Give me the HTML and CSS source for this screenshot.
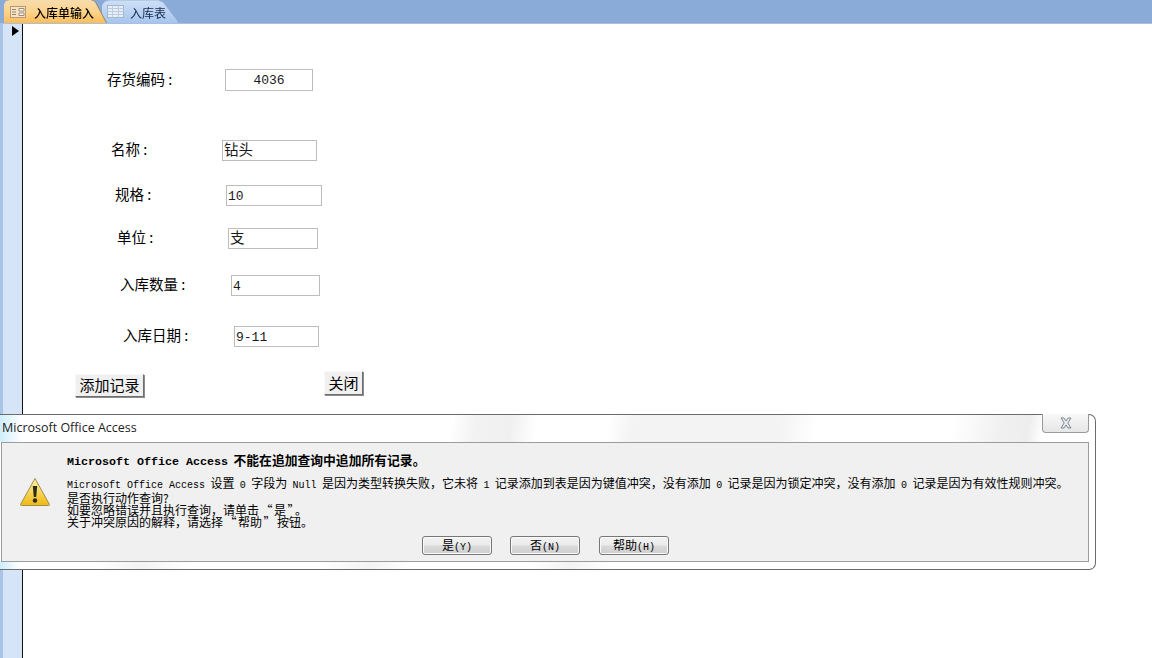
FILE: index.html
```html
<!DOCTYPE html>
<html lang="zh-CN">
<head>
<meta charset="utf-8">
<title>入库单输入</title>
<link rel="stylesheet" href="styles.css">
</head>
<body>
<div class="tabbar">
  <div class="tab tab-active">
    <svg class="tab-icon" width="20" height="16" viewBox="0 0 20 16"><rect x="1.500" y="2.500" width="15" height="11" fill="#f6e2c4" stroke="#b89a78"/><path d="M3 5.500h4M3 8h4M3 10.500h4" stroke="#9a8468"/><path d="M10 4.500h5v2.500h-5zM10 9h5v2.500h-5z" fill="#fff" stroke="#a08a70"/></svg>
    <span class="tab-text">入库单输入</span>
  </div>
  <div class="tab tab-idle">
    <svg class="tab-icon" width="20" height="16" viewBox="0 0 20 16"><rect x="1.500" y="1.500" width="16" height="12" fill="#e6eef8" stroke="#a3b5cc"/><path d="M1.500 4.500h16M1.500 7.500h16M1.500 10.500h16M6.500 1.500v12M12.500 1.500v12" stroke="#bccbde"/></svg>
    <span class="tab-text">入库表</span>
  </div>
</div>
<div class="workspace">
  <div class="selector"><i class="arrow"></i></div>
  <main class="form">
    <div class="row r1"><label class="lbl">存货编码 :</label><div class="field f-code">4036</div></div>
    <div class="row r2"><label class="lbl">名称 :</label><div class="field f2">钻头</div></div>
    <div class="row r3"><label class="lbl">规格 :</label><div class="field f3">10</div></div>
    <div class="row r4"><label class="lbl">单位 :</label><div class="field f4">支</div></div>
    <div class="row r5"><label class="lbl">入库数量 :</label><div class="field f5">4</div></div>
    <div class="row r6"><label class="lbl">入库日期 :</label><div class="field f6">9-11</div></div>
    <div class="actions">
      <button class="fbtn fb-add">添加记录</button>
      <button class="fbtn fb-close">关闭</button>
    </div>
  </main>
</div>
<section class="dialog">
  <header class="dlg-title">
    <span>Microsoft Office Access</span>
    <div class="dlg-x"><svg width="14" height="12" viewBox="0 0 14 12"><path d="M2 1h3l2 3 2-3h3L8.800 6 12 11H9L7 8l-2 3H2l3.200-5z" fill="#e8ecf0" stroke="#7d8792"/></svg></div>
  </header>
  <div class="dlg-panel">
    <svg class="warn" width="32" height="30" viewBox="0 0 32 30">
      <defs><linearGradient id="wg" x1="0" y1="0" x2="0" y2="1"><stop offset="0" stop-color="#fff3a6"/><stop offset="1" stop-color="#eeb90f"/></linearGradient></defs>
      <path d="M16 1.500 30.500 27.500a1 1 0 0 1-1 1H2.500a1 1 0 0 1-1-1z" fill="url(#wg)" stroke="#a08c50"/>
      <path d="M13.800 9h4.400l-1 11h-2.400z" fill="#2c2c1e"/><circle cx="16" cy="23.500" r="2.200" fill="#2c2c1e"/>
    </svg>
    <div class="msg">
      <p class="msg-head"><span class="lat-b">Microsoft Office Access</span> 不能在追加查询中追加所有记录。</p>
      <p class="msg-line"><span class="lat">Microsoft Office Access</span> 设置 <span class="lat">0</span> 字段为 <span class="lat">Null</span> 是因为类型转换失败，它未将 <span class="lat">1</span> 记录添加到表是因为键值冲突，没有添加 <span class="lat">0</span> 记录是因为锁定冲突，没有添加 <span class="lat">0</span> 记录是因为有效性规则冲突。</p>
      <p class="msg-line">是否执行动作查询?</p>
      <p class="msg-line">如要忽略错误并且执行查询，请单击<span class="q">“</span>是<span class="q">”</span>。</p>
      <p class="msg-line">关于冲突原因的解释，请选择<span class="q">“</span>帮助<span class="q">”</span>按钮。</p>
    </div>
    <div class="dlg-actions">
      <button class="dbtn">是<span class="lat">(Y)</span></button>
      <button class="dbtn">否<span class="lat">(N)</span></button>
      <button class="dbtn">帮助<span class="lat">(H)</span></button>
    </div>
  </div>
</section>
</body>
</html>
```
FILE: styles.css
```css
* { box-sizing: border-box; }
html, body { margin: 0; padding: 0; }
body {
  width: 1152px; height: 658px; overflow: hidden; position: relative;
  background: #fff; color: #000;
  font-family: "Noto Sans CJK SC", "Liberation Sans", sans-serif;
  display: flex; flex-direction: column;
}
.tabbar {
  height: 24px; flex: none; display: flex; padding-left: 4px;
  background: #8aabd8;
  border-bottom: 1px solid #a9bfdc;
}
.tab {
  height: 23px; display: flex; align-items: center; font-size: 12px;
  position: relative; padding-top: 1px;
}
.tab::before { content: ""; position: absolute; inset: 0; }
.tab-icon, .tab-text { position: relative; }
.tab-icon { flex: none; }
.tab-active {
  width: 102px; padding-left: 5px; gap: 5px; font-weight: 500; z-index: 2;
  filter: drop-shadow(1px 0 0 #8f8468);
}
.tab-active::before {
  background: linear-gradient(#f6dcae 0, #fcd48c 50%, #fdbd58 100%);
  clip-path: polygon(0 23px, 0 4px, 2px 1px, 6px 0, 87px 0, 91px 2px, 102px 23px);
}
.tab-idle {
  width: 76px; margin-left: -4px; padding-left: 4px; gap: 4px; color: #15294b;
  filter: drop-shadow(0 -1px 0 #b4cbe8);
}
.tab-idle::before {
  background: linear-gradient(#cfe0f6, #a6c5ee);
  clip-path: polygon(0 23px, 0 6px, 3px 2px, 8px 1px, 56px 1px, 61px 3px, 76px 23px);
}
.workspace { flex: 1; display: flex; min-height: 0; }
.selector {
  width: 23px; flex: none; padding: 2px 0 0 9px;
  background: #d5e4f6; border-left: 3px solid #aac4e6; border-right: 1px solid #111;
}
.arrow {
  display: block; width: 0; height: 0;
  border-left: 7px solid #000; border-top: 5.500px solid transparent; border-bottom: 5.500px solid transparent;
}
.form { flex: 1; position: relative; }
.row { display: flex; align-items: center; height: 21px; font-size: 14.500px; }
.lbl { display: block; flex: none; padding-bottom: 4px; }
.field {
  height: 100%; flex: none; border: 1px solid #bdbdbd; background: #fff; color: #1a1a1a;
  font-size: 14.500px; line-height: 21px; padding-left: 1px; white-space: nowrap;
  font-family: "Liberation Mono", "Noto Sans CJK SC", monospace;
}
.r1 { margin-top: 45px; padding-left: 84px; height: 22px; }
.r1 .lbl { width: 118px; }
.f-code { width: 88px; text-align: center; font-size: 13px; line-height: 21px; padding: 0; }
.r2 { margin-top: 49px; padding-left: 88px; }
.r2 .lbl { width: 111px; }
.f2 { width: 95px; }
.r3 { margin-top: 24px; padding-left: 92px; }
.r3 .lbl { width: 111px; }
.f3 { width: 96px; font-size: 13px; }
.r4 { margin-top: 22px; padding-left: 94px; }
.r4 .lbl { width: 111px; }
.f4 { width: 90px; }
.r5 { margin-top: 26px; padding-left: 97px; }
.r5 .lbl { width: 111px; }
.f5 { width: 89px; font-size: 13px; }
.r6 { margin-top: 30px; padding-left: 100px; }
.r6 .lbl { width: 111px; }
.f6 { width: 85px; font-size: 13px; }
.actions { display: flex; align-items: flex-start; margin-top: 24px; padding-left: 52px; }
.fbtn {
  font: 15px/19px "Noto Sans CJK SC", sans-serif; color: #000; padding: 0 0 2px; background: #f0f0f0;
  border: 1px solid; border-color: #f8f8f8 #6e6e6e #6e6e6e #f8f8f8;
  box-shadow: 1px 1px 0 #8c8c8c;
}
.fb-add { width: 69px; height: 23px; margin-top: 3px; }
.fb-close { width: 39px; height: 24px; margin-left: 180px; }
.dialog {
  position: absolute; left: 0; top: 414px; width: 1096px; height: 156px;
  display: flex; flex-direction: column;
  border: 1px solid #6b6b6b; border-left: 0; border-radius: 0 7px 7px 0;
  background-color: #fff;
  background-repeat: no-repeat;
  background-image:
    linear-gradient(90deg, rgba(190,232,250,.75), rgba(255,255,255,0) 22px),
    linear-gradient(100deg, rgba(242,242,242,0) 446px, #f2f2f2 470px, #f0f0f0 505px, rgba(240,240,240,0) 530px),
    linear-gradient(100deg, rgba(242,242,242,0) 600px, #f3f3f3 625px, #f3f3f3 770px, rgba(240,240,240,0) 805px),
    linear-gradient(100deg, rgba(242,242,242,0) 940px, #f1f1f1 985px, #ededed 1015px, rgba(240,240,240,0) 1030px),
    linear-gradient(90deg, rgba(190,232,250,.8), rgba(255,255,255,0) 20px),
    linear-gradient(90deg, rgba(235,235,235,0) 95px, #f3f3f3 140px, rgba(235,235,235,0) 190px, rgba(235,235,235,0) 320px, #f3f3f3 370px, rgba(235,235,235,0) 410px, rgba(235,235,235,0) 530px, #f3f3f3 570px, rgba(235,235,235,0) 610px);
  background-size: 100% 27px, 100% 27px, 100% 27px, 100% 27px, 100% 8px, 100% 8px;
  background-position: 0 0, 0 0, 0 0, 0 0, 0 100%, 0 100%;
}
.dlg-title {
  height: 27px; flex: none; display: flex; justify-content: space-between; align-items: flex-start;
  padding: 5px 6px 0 2px; font: 12.500px/16px "Open Sans", "Liberation Sans", sans-serif; color: #222;
}
.dlg-x {
  width: 47px; height: 19px; margin-top: -6px; display: flex; align-items: center; justify-content: center;
  border: 1px solid #9a9a9a; border-top: 0; border-radius: 0 0 4px 4px;
  background: linear-gradient(#f8f8f8, #e6e6e6);
}
.dlg-panel {
  width: 1088px; height: 120px; margin-left: 1px; flex: none; position: relative;
  background: #f0f0f0; border: 1px solid #9c9c9c;
  display: flex; flex-direction: column;
}
.warn { position: absolute; left: 17px; top: 34px; }
.msg { padding: 10px 0 0 65px; word-spacing: 2.700px; }
.msg p { margin: 0; white-space: nowrap; }
.msg-head { font-size: 12.800px; font-weight: 700; line-height: 13px; margin-bottom: 8px !important; }
.msg-line { font-size: 12px; line-height: 12px; }
.q { padding: 0 1.500px; }
.lat { font-family: "Liberation Mono", monospace; font-size: 10px; word-spacing: 0; }
.lat-b { font-family: "Liberation Mono", monospace; font-size: 11.670px; font-weight: 700; word-spacing: 0; }
.dlg-actions { display: flex; margin-top: 8px; padding-left: 420px; gap: 19px; }
.dbtn {
  width: 70px; height: 19px; padding: 0; font: 12px/15px "Noto Sans CJK SC", sans-serif; color: #000;
  border: 1px solid #777; border-radius: 3px;
  background: linear-gradient(#f3f3f3 0, #ebebeb 45%, #d9d9d9 55%, #cfcfcf 100%);
  box-shadow: inset 0 0 0 1px #fafafa;
}
.dbtn:first-child { margin-right: -1px; }
```
